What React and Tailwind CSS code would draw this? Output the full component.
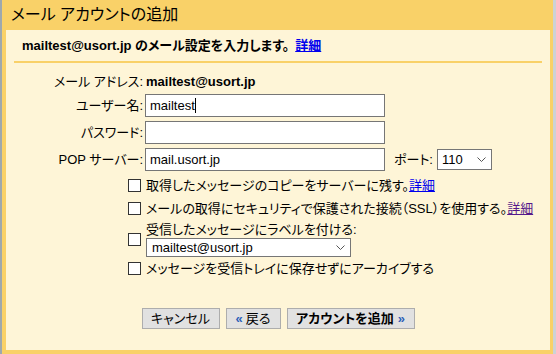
import React from 'react';

const Check = () => (
  <span className="block w-[13px] h-[13px] border border-[#333] bg-white shrink-0" />
);

const Chevron = () => (
  <svg width="9" height="6" viewBox="0 0 9 6" className="shrink-0">
    <polyline points="0.5,0.5 4.5,4.5 8.5,0.5" fill="none" stroke="#555" strokeWidth="1" />
  </svg>
);

const Link = ({ visited, children }) => (
  <span className={`underline ${visited ? 'text-[#551a8b]' : 'text-[#0000ee]'}`}>{children}</span>
);

const Field = ({ label, children }) => (
  <div className="flex items-center h-[23px] mt-[4px]">
    <span className="w-[131px] text-right pr-[2px]">{label}</span>
    {children}
  </div>
);

const Input = ({ value, caret }) => (
  <div className="w-[240px] h-[23px] border border-[#767676] bg-white flex items-center px-[4px]">
    {value}
    {caret && <span className="inline-block w-px h-[15px] bg-black" />}
  </div>
);

const App = () => {
  return (
    <div className="w-[556px] h-[354px] flex bg-[#c9ced2] text-[13px] text-black font-['Liberation_Sans','Noto_Sans_CJK_JP',sans-serif] [font-feature-settings:'palt'] overflow-hidden">
      <div className="w-[2px] bg-[#9ea8ae]" />
      <div className="w-[551px] h-[354px] bg-[#f9d168] flex flex-col pl-[4px] pr-[3px] pb-[4px]">
        {/* Header */}
        <div className="h-[30px] flex items-center pl-[5px] text-[16px] leading-none">
          メール アカウントの追加
        </div>

        {/* Body */}
        <div className="flex-1 bg-[#fef5d7] flex flex-col px-[8px]">
          <div className="h-[31px] flex items-center pl-[8px] font-bold">
            mailtest@usort.jp のメール設定を入力します。<span className="ml-[6px]"><Link>詳細</Link></span>
          </div>
          <div className="h-[2px] bg-[#f9d168]" />

          <div className="flex items-center h-[16px] mt-[11px]">
            <span className="w-[131px] text-right pr-[2px]">メール アドレス:</span>
            <span className="font-bold pl-[1px]">mailtest@usort.jp</span>
          </div>
          <Field label="ユーザー名:">
            <Input value="mailtest" caret />
          </Field>
          <Field label="パスワード:">
            <Input value="" />
          </Field>
          <Field label="POP サーバー:">
            <Input value="mail.usort.jp" />
            <span className="ml-[9px]">ポート:</span>
            <div className="ml-[4px] w-[55px] h-[21px] border border-[#767676] bg-white flex items-center justify-between pl-[4px] pr-[5px]">
              <span>110</span>
              <Chevron />
            </div>
          </Field>

          <div className="flex flex-col pl-[114px] mt-[3px]">
            <div className="flex items-center gap-[5px] h-[23px]">
              <Check />
              <span>取得したメッセージのコピーをサーバーに残す。<Link>詳細</Link></span>
            </div>
            <div className="flex items-center gap-[5px] h-[23px]">
              <Check />
              <span>メールの取得にセキュリティで保護された接続（SSL）を使用する。<Link visited>詳細</Link></span>
            </div>
            <div className="flex items-center gap-[5px] h-[37px] pt-[1px]">
              <Check />
              <div className="flex flex-col">
                <span className="h-[17px] leading-[17px]">受信したメッセージにラベルを付ける:</span>
                <div className="w-[205px] h-[19px] border border-[#767676] bg-white flex items-center justify-between pl-[5px] pr-[5px]">
                  <span>mailtest@usort.jp</span>
                  <Chevron />
                </div>
              </div>
            </div>
            <div className="flex items-center gap-[5px] h-[23px]">
              <Check />
              <span>メッセージを受信トレイに保存せずにアーカイブする</span>
            </div>
          </div>

          {/* Buttons */}
          <div className="flex justify-center gap-[6px] mt-[28px]">
            <button className="w-[78px] h-[21px] bg-[#e1e1e1] border border-[#adadad] flex items-center justify-center">
              キャンセル
            </button>
            <button className="w-[55px] h-[21px] bg-[#e1e1e1] border border-[#adadad] flex items-center justify-center gap-[3px]">
              <span className="text-[#2c5fb8] font-bold">«</span>戻る
            </button>
            <button className="w-[128px] h-[21px] bg-[#e1e1e1] border border-[#adadad] flex items-center justify-center gap-[4px] font-bold">
              アカウントを追加<span className="text-[#2c5fb8]">»</span>
            </button>
          </div>
        </div>
      </div>
      <div className="w-[3px] bg-[#cdd2d6]" />
    </div>
  );
};

export default App;
